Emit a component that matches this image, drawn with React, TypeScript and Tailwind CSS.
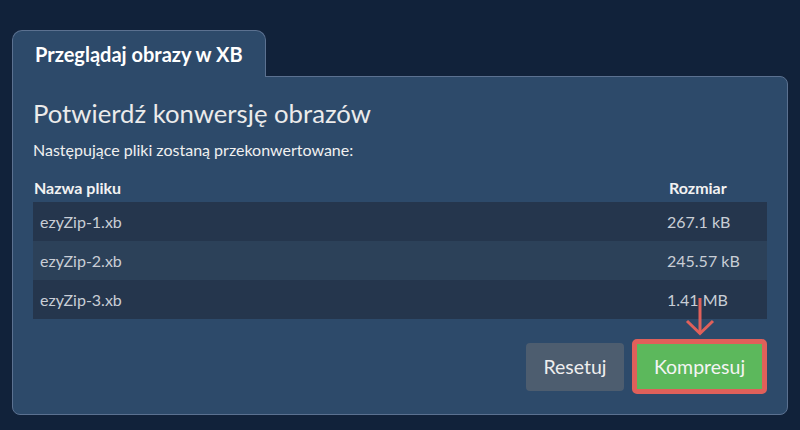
import React from "react";

const files = [
  { name: "ezyZip-1.xb", size: "267.1 kB" },
  { name: "ezyZip-2.xb", size: "245.57 kB" },
  { name: "ezyZip-3.xb", size: "1.41 MB" },
];

export default function App() {
  return (
    <div
      className="h-[430px] w-[800px] overflow-hidden bg-[#11223a] pl-[12px] pr-[12px] pt-[30px]"
      style={{ fontFamily: "Lato, 'Noto Sans', sans-serif" }}
    >
      {/* Tab */}
      <div className="relative z-10 -mb-px inline-flex h-[47px] items-center rounded-t-[10px] border border-b-0 border-[#5b7190] bg-[#2d4a6a] px-[22px]">
        <span className="text-[20px] font-bold text-white">Przeglądaj obrazy w XB</span>
      </div>

      {/* Panel */}
      <div className="w-[776px] rounded-b-[8px] rounded-tr-[8px] border border-[#5b7190] bg-[#2d4a6a] px-[20px] pb-[20px] pt-[20px]">
        <h2 className="text-[25.7px] leading-[32px] text-[#ebebeb]">Potwierdź konwersję obrazów</h2>
        <p className="mt-[11px] text-[16px] leading-[20px] text-[#f0f0f0]">
          Następujące pliki zostaną przekonwertowane:
        </p>

        {/* Table */}
        <div className="mt-[18px]">
          <div className="grid h-[24px] grid-cols-[1fr_100px] text-[16px] font-bold leading-[20px] text-[#f2f2f2]">
            <div className="pl-px">Nazwa pliku</div>
            <div className="pl-[2px]">Rozmiar</div>
          </div>
          {files.map((f, i) => (
            <div
              key={f.name}
              className={`grid h-[39px] grid-cols-[1fr_100px] items-center text-[16px] text-[#c9ced6] ${
                i % 2 === 1 ? "bg-[#2c4159]" : "bg-[#25364d]"
              }`}
            >
              <div className="pl-[7px]">{f.name}</div>
              <div>{f.size}</div>
            </div>
          ))}
        </div>

        {/* Buttons */}
        <div className="mt-[20px] flex items-center justify-end gap-[8px]">
          <button className="h-[48px] w-[98px] rounded-[4px] bg-[#4d5d6f] text-[19.5px] text-[#eeeeee]">
            Resetuj
          </button>
          <div className="relative">
            <svg
              className="absolute bottom-[58px] left-1/2 -translate-x-1/2"
              width="30"
              height="38"
              viewBox="0 0 30 38"
              fill="none"
              stroke="#e0605a"
              strokeWidth="3"
            >
              <path d="M15 0 V36" />
              <path d="M2 23 L15 35.5 L28 23" />
            </svg>
            <button className="h-[55px] w-[135px] rounded-[5px] border-[5px] border-[#e0605a] bg-[#5cb85c] text-[19.5px] text-[#f4f4f4]">
              Kompresuj
            </button>
          </div>
        </div>
      </div>
    </div>
  );
}
